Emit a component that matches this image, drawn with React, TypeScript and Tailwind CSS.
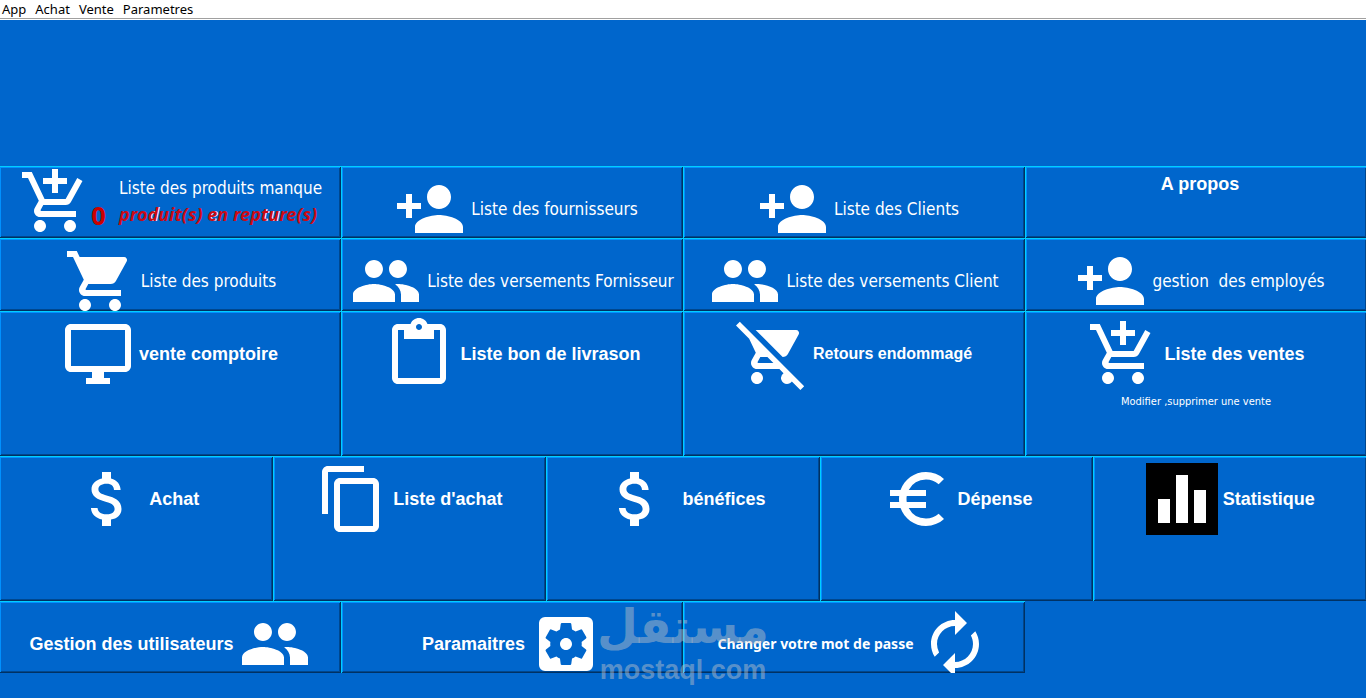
import type { ReactNode } from 'react';
import clsx from 'clsx';
import {
  MdAddShoppingCart,
  MdAttachMoney,
  MdAutorenew,
  MdContentCopy,
  MdContentPaste,
  MdEqualizer,
  MdEuroSymbol,
  MdPeople,
  MdPersonAdd,
  MdRemoveShoppingCart,
  MdSettingsApplications,
  MdShoppingCart,
} from 'react-icons/md';

const menus = ['App', 'Achat', 'Vente', 'Parametres'];

// Label styles shared by the tiles
const light = "font-['DejaVu_Sans_Condensed','DejaVu_Sans',sans-serif] text-[17px]";
const bold = "font-['Liberation_Sans',sans-serif] text-[18px] font-bold";
const boldSmall = "font-['Liberation_Sans',sans-serif] text-[16px] font-bold";
const tahomaBold = "font-['Noto_Sans',sans-serif] text-[14px] font-bold";

// Raised bevel: two light lines top/left, two dark lines bottom/right
const bevel =
  'bg-[#0066cc] shadow-[inset_1px_1px_0_#00cfff,inset_-1px_-1px_0_#003163,inset_2px_2px_0_#0091ff,inset_-2px_-2px_0_#00478e]';

type IconProps = { size?: number; className?: string };

// Outlined monitor, react-icons only ships the filled one
function MonitorIcon({ size = 24, className }: IconProps) {
  return (
    <svg viewBox="0 0 24 24" width={size} height={size} fill="currentColor" className={className}>
      <path d="M21 2H3c-1.1 0-2 .9-2 2v12c0 1.1.9 2 2 2h7v2H8v2h8v-2h-2v-2h7c1.1 0 2-.9 2-2V4c0-1.1-.9-2-2-2zm0 14H3V4h18v12z" />
    </svg>
  );
}

type TileProps = {
  label: string;
  icon?: (props: IconProps) => ReactNode;
  text?: string;
  iconRight?: boolean;
  iconClass?: string;
  className?: string;
  children?: ReactNode;
};

function Tile({ label, icon: Icon, text = bold, iconRight, iconClass, className, children }: TileProps) {
  return (
    <button
      type="button"
      className={clsx('flex flex-col items-center justify-start gap-[5px] overflow-hidden pt-[7px] text-white', bevel, className)}
    >
      <span className={clsx('flex items-center gap-[5px]', iconRight && 'flex-row-reverse')}>
        {Icon && <Icon size={72} className={clsx('shrink-0', iconClass)} />}
        <span className={clsx('whitespace-pre leading-[22px]', text)}>{label}</span>
      </span>
      {children}
    </button>
  );
}

function MissingProductsTile() {
  const glint = 'text-shadow-[1px_0_0_#ffffff]';

  return (
    <button type="button" className={clsx('flex items-start overflow-hidden pl-[20px] text-left text-white', bevel)}>
      <MdAddShoppingCart size={72} className="shrink-0" />
      <span className="w-[28px] shrink-0 pt-[36px] font-['DejaVu_Sans_Condensed','DejaVu_Sans',sans-serif] text-[24px] leading-[30px] font-bold text-[#cc0000]">
        0
      </span>
      <span className="flex flex-col gap-[4px] pt-[11px] whitespace-nowrap">
        <span className={clsx('leading-[22px]', light)}>Liste des produits manque</span>
        <span className="font-['Noto_Sans',sans-serif] text-[18px] leading-[22px] font-bold text-[#cc0a14] italic">
          pro<span className={glint}>d</span>uit(s) <span className={glint}>e</span>n rep
          <span className={glint}>tu</span>re(s)
        </span>
      </span>
    </button>
  );
}

function Watermark() {
  return (
    <div className="pointer-events-none absolute bottom-[14px] left-1/2 flex -translate-x-1/2 flex-col items-center font-bold text-[#c8c8c8]/45">
      <span dir="rtl" lang="ar" className="font-['DejaVu_Sans',sans-serif] text-[47px] leading-[58px]">
        مستقل
      </span>
      <span className="font-['Liberation_Sans',sans-serif] text-[27px] leading-[28px]">mostaql.com</span>
    </div>
  );
}

export default function App() {
  return (
    <div className="relative flex min-h-screen flex-col overflow-hidden bg-[#0066cc]">
      <nav className="border-b border-white bg-white">
        <div className="flex h-[19px] items-center gap-[9px] border-b border-[#a0a0a0] pl-[2px] font-['Noto_Sans',sans-serif] text-[13px] leading-[18px] text-black">
          {menus.map((menu) => (
            <button key={menu} type="button">
              {menu}
            </button>
          ))}
        </div>
      </nav>

      <main className="-mx-px pt-[146px]">
        <div className="grid auto-rows-[72px] grid-cols-4">
          <MissingProductsTile />
          <Tile label="Liste des fournisseurs" icon={MdPersonAdd} text={light} className="pl-[8px]" />
          <Tile label="Liste des Clients" icon={MdPersonAdd} text={light} className="pl-[8px]" />
          <Tile label="A propos" className="pl-[8px]" />
        </div>
        <div className="grid auto-rows-[73px] grid-cols-4">
          <Tile label="Liste des produits" icon={MdShoppingCart} text={light} />
          <Tile label="Liste des versements Fornisseur" icon={MdPeople} text={light} />
          <Tile label="Liste des versements Client" icon={MdPeople} text={light} />
          <Tile label="gestion  des employés" icon={MdPersonAdd} text={light} className="pl-[8px]" />
        </div>
        <div className="grid auto-rows-[145px] grid-cols-4">
          <Tile label="vente comptoire" icon={MonitorIcon} />
          <Tile label="Liste bon de livrason" icon={MdContentPaste} />
          <Tile label="Retours endommagé" icon={MdRemoveShoppingCart} text={boldSmall} />
          <Tile label="Liste des ventes" icon={MdAddShoppingCart}>
            <span className="font-['DejaVu_Sans_Condensed','DejaVu_Sans',sans-serif] text-[11px] leading-[14px]">
              Modifier ,supprimer une vente
            </span>
          </Tile>
        </div>
        <div className="grid auto-rows-[145px] grid-cols-5">
          <Tile label="Achat" icon={MdAttachMoney} />
          <Tile label="Liste d'achat" icon={MdContentCopy} />
          <Tile label=" bénéfices" icon={MdAttachMoney} />
          <Tile label="Dépense" icon={MdEuroSymbol} />
          <Tile label="Statistique" icon={MdEqualizer} iconClass="bg-black" />
        </div>
        <div className="grid auto-rows-[72px] grid-cols-4">
          <Tile label="Gestion des utilisateurs" icon={MdPeople} iconRight />
          <Tile label="Paramaitres" icon={MdSettingsApplications} iconRight />
          <Tile label="Changer votre mot de passe" icon={MdAutorenew} text={tahomaBold} iconRight />
        </div>
      </main>

      <Watermark />
    </div>
  );
}
